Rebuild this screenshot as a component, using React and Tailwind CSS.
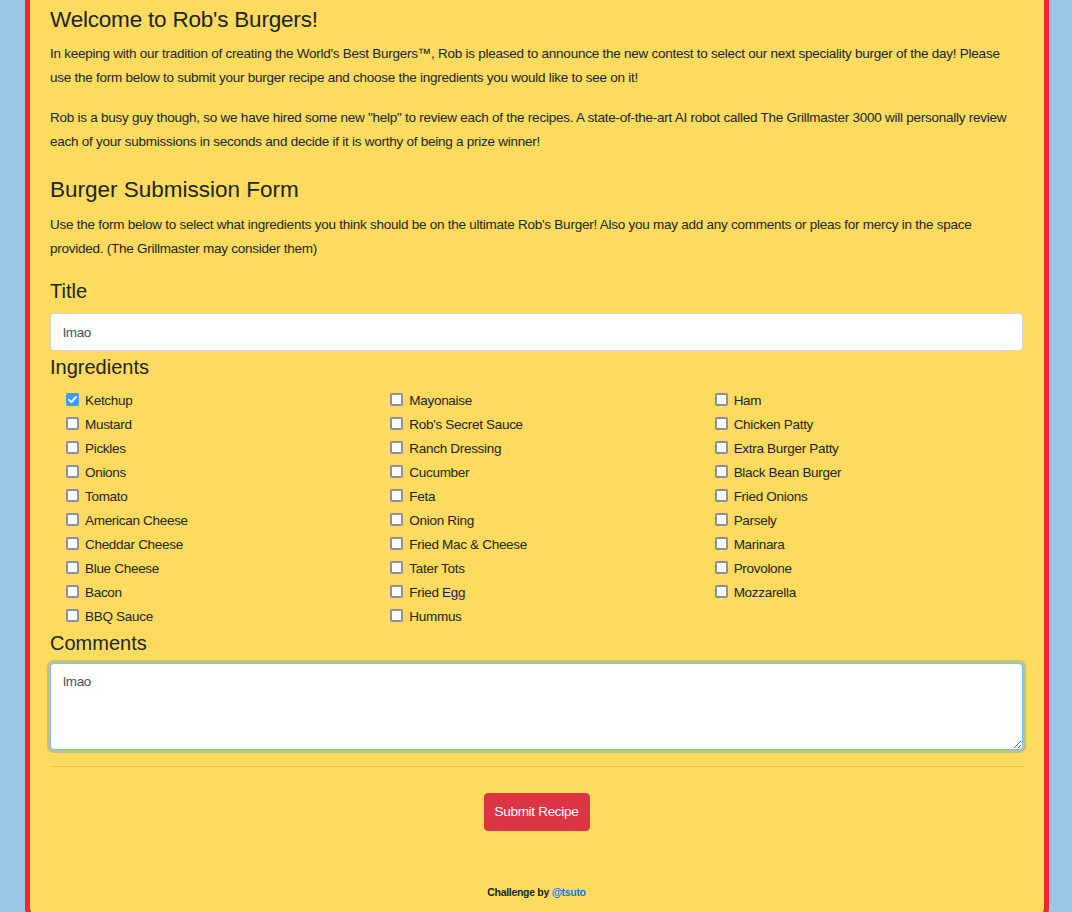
import React, { useEffect, useRef } from 'react';

const font = { fontFamily: '"Liberation Sans", Arial, sans-serif' };

const columns = [
  ['Ketchup', 'Mustard', 'Pickles', 'Onions', 'Tomato', 'American Cheese', 'Cheddar Cheese', 'Blue Cheese', 'Bacon', 'BBQ Sauce'],
  ['Mayonaise', "Rob's Secret Sauce", 'Ranch Dressing', 'Cucumber', 'Feta', 'Onion Ring', 'Fried Mac & Cheese', 'Tater Tots', 'Fried Egg', 'Hummus'],
  ['Ham', 'Chicken Patty', 'Extra Burger Patty', 'Black Bean Burger', 'Fried Onions', 'Parsely', 'Marinara', 'Provolone', 'Mozzarella'],
];

const Ingredient = ({ name }) => (
  <label className="flex items-start h-[24px] pl-[16px] text-[13.5px] leading-[24px] tracking-[-0.3px]">
    <span className="relative mt-[3px] w-[13px] h-[13px] shrink-0">
      <input
        type="checkbox"
        defaultChecked={name === 'Ketchup'}
        className="peer appearance-none block m-0 w-[13px] h-[13px] bg-white border-2 border-[#8f8f9d] rounded-[2px] checked:bg-[#3d9ef0] checked:border-[#3d9ef0]"
      />
      <svg
        viewBox="0 0 13 13"
        className="pointer-events-none absolute inset-0 hidden peer-checked:block"
      >
        <path d="M3 6.8 L5.4 9.2 L10 3.9" fill="none" stroke="white" strokeWidth="1.9" strokeLinecap="round" strokeLinejoin="round" />
      </svg>
    </span>
    <span className="ml-[6px] -translate-y-[1px]">{name}</span>
  </label>
);

export default function App() {
  const commentsRef = useRef(null);

  useEffect(() => {
    const el = commentsRef.current;
    if (el) {
      el.focus();
      el.setSelectionRange(4, 4);
    }
  }, []);

  return (
    <div className="min-h-screen bg-[#9bc6e6] text-[#212529]" style={font}>
      <div className="ml-[25px] w-[1024px] bg-[#fcdb5e] border-x-[5px] border-b-[5px] border-[#ef2a2f] rounded-b-[14px] pl-[20px] pr-[21px] pt-[6px] pb-[17px]">
        <h1 className="text-[22.5px] leading-[1.2] tracking-[-0.2px] mb-[9px]">Welcome to Rob's Burgers!</h1>
        <p className="text-[13.5px] leading-[24px] tracking-[-0.25px] mb-[16px] whitespace-nowrap">
          In keeping with our tradition of creating the World's Best Burgers™, Rob is pleased to announce the new contest to select our next speciality burger of the day! Please
          <br />
          use the form below to submit your burger recipe and choose the ingredients you would like to see on it!
        </p>
        <p className="text-[13.5px] leading-[24px] tracking-[-0.25px] whitespace-nowrap">
          Rob is a busy guy though, so we have hired some new "help" to review each of the recipes. A state-of-the-art AI robot called The Grillmaster 3000 will personally review
          <br />
          each of your submissions in seconds and decide if it is worthy of being a prize winner!
        </p>

        <h2 className="text-[22.5px] leading-[1.2] mt-[22px] mb-[10px]">Burger Submission Form</h2>
        <p className="text-[13.5px] leading-[24px] tracking-[-0.25px] whitespace-nowrap">
          Use the form below to select what ingredients you think should be on the ultimate Rob's Burger! Also you may add any comments or pleas for mercy in the space
          <br />
          provided. (The Grillmaster may consider them)
        </p>

        <form onSubmit={(e) => e.preventDefault()}>
          <div className="mt-[18px]">
            <label className="block text-[20px] leading-[24px] mb-[10px]">Title</label>
            <input
              type="text"
              defaultValue="lmao"
              className="block w-full h-[38px] px-[12px] bg-white border border-[#ced4da] rounded-[4px] text-[13.5px] tracking-[-0.3px] text-[#495057] outline-none"
              style={font}
            />
          </div>

          <div className="mt-[4px]">
            <label className="block text-[20px] leading-[24px]">Ingredients</label>
            <div className="grid grid-cols-3 mt-[11px]">
              {columns.map((col, i) => (
                <div key={i} className="flex flex-col">
                  {col.map((name) => (
                    <Ingredient key={name} name={name} />
                  ))}
                </div>
              ))}
            </div>
          </div>

          <div className="mt-[1px]">
            <label className="block text-[20px] leading-[24px] mb-[8px]">Comments</label>
            <textarea
              ref={commentsRef}
              defaultValue="lmao"
              className="block w-full h-[87px] px-[12px] py-[6px] bg-white border border-[#80bdff] rounded-[4px] text-[13.5px] leading-[24px] tracking-[-0.3px] text-[#495057] outline-none shadow-[0_0_0_3px_rgba(0,123,255,0.25)]"
              style={font}
            />
          </div>

          <hr className="mt-[16px] border-0 border-t border-[rgba(0,0,0,0.1)]" />

          <div className="flex justify-center mt-[26px]">
            <button
              type="submit"
              className="w-[106px] h-[38px] bg-[#dc3545] text-white text-[13.5px] tracking-[-0.3px] rounded-[4px] border border-[#dc3545]"
              style={font}
            >
              Submit Recipe
            </button>
          </div>
        </form>

        <p className="text-center text-[10.5px] leading-[16px] tracking-[-0.3px] font-bold mt-[53px]">
          Challenge by <a href="#" className="text-[#007bff]">@tsuto</a>
        </p>
      </div>
    </div>
  );
}
